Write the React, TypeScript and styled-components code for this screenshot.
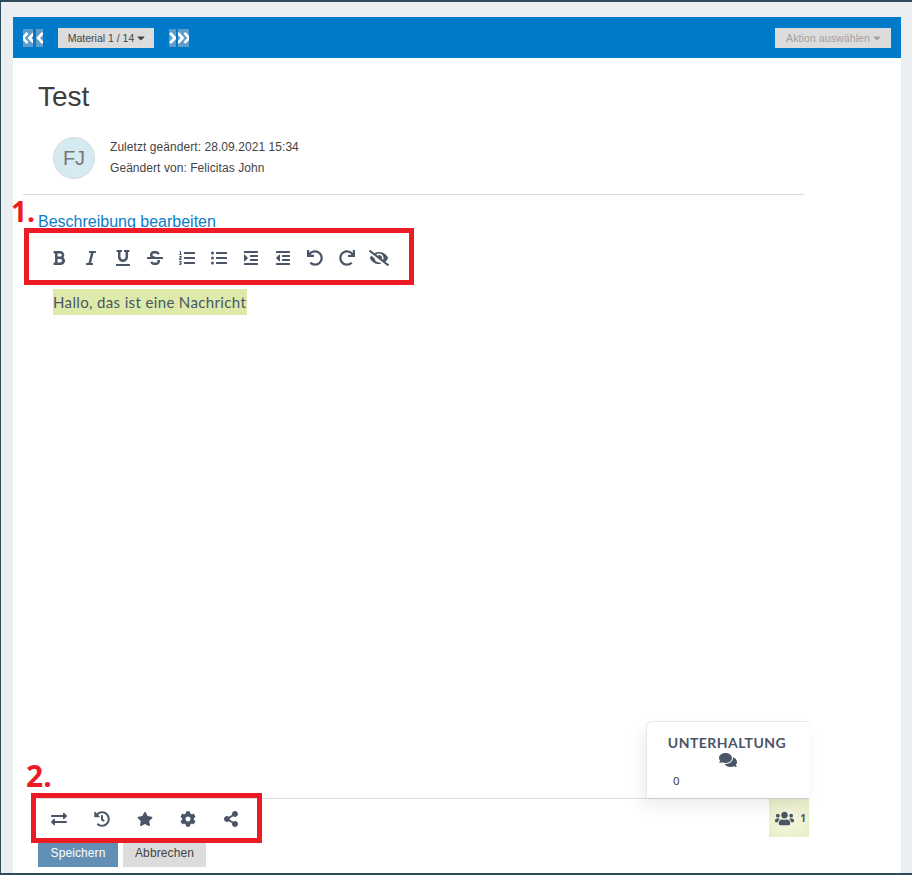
import styled, { createGlobalStyle } from 'styled-components';
import {
  FaAngleDoubleLeft,
  FaAngleDoubleRight,
  FaAngleLeft,
  FaAngleRight,
  FaBold,
  FaCaretDown,
  FaCog,
  FaComments,
  FaExchangeAlt,
  FaEyeSlash,
  FaHistory,
  FaIndent,
  FaItalic,
  FaListOl,
  FaListUl,
  FaOutdent,
  FaRedo,
  FaShareAlt,
  FaStar,
  FaStrikethrough,
  FaUnderline,
  FaUndo,
  FaUsers,
} from 'react-icons/fa';

const GlobalStyle = createGlobalStyle`
  html, body {
    margin: 0;
    padding: 0;
    overflow: hidden;
  }
  body {
    font-family: "Liberation Sans", Arial, sans-serif;
  }
`;

const Frame = styled.div`
  position: relative;
  box-sizing: border-box;
  width: 912px;
  height: 875px;
  padding: 15px 11px 0 12px;
  background: #ebeff1;
  border: 0 solid #2f4a5a;
  border-width: 2px 0 2px 1px;
  overflow: hidden;
`;

const Panel = styled.div`
  height: 856px;
  background: #fff;
  display: flex;
  flex-direction: column;
`;

const Header = styled.header`
  height: 41px;
  background: #027aca;
  display: flex;
  align-items: center;
  padding: 0 10px;
  flex: none;
`;

const Pager = styled.span<{ $w: number; $gap?: number }>`
  display: inline-flex;
  align-items: center;
  justify-content: center;
  height: 18px;
  width: ${(p) => p.$w}px;
  margin-right: ${(p) => p.$gap ?? 0}px;
  background: #5d9ccb;
  color: #fff;
  overflow: hidden;
  svg {
    flex: none;
    width: 18px;
    height: 18px;
  }
`;

const MenuButton = styled.button<{ $muted?: boolean }>`
  box-sizing: border-box;
  height: 20px;
  padding: 0 0 0 3px;
  border: 0;
  display: inline-flex;
  align-items: center;
  justify-content: center;
  gap: 1px;
  background: #dcdcdc;
  color: ${(p) => (p.$muted ? '#a0a0a0' : '#444')};
  font: 10.5px "Liberation Sans", Arial, sans-serif;
  letter-spacing: ${(p) => (p.$muted ? '0.1px' : '0')};
  width: ${(p) => (p.$muted ? 116 : 96)}px;
  margin: ${(p) => (p.$muted ? '0 0 0 auto' : '0 15px 0 15px')};
  svg {
    font-size: 12px;
  }
`;

const Body = styled.main`
  flex: 1;
  width: 796px;
  display: flex;
  flex-direction: column;
  padding-left: 10px;
  box-sizing: border-box;
`;

const Title = styled.h1`
  margin: 22px 0 0 15px;
  font-size: 28px;
  line-height: 33px;
  font-weight: 400;
  color: #3d3d3d;
`;

const MetaRow = styled.div`
  display: flex;
  align-items: center;
  gap: 15px;
  margin: 24px 0 0 30px;
`;

const Avatar = styled.div`
  box-sizing: border-box;
  width: 42px;
  height: 42px;
  border-radius: 50%;
  background: #d6eaf2;
  border: 1px solid #d5dcdf;
  color: #777;
  font-size: 20px;
  display: flex;
  align-items: center;
  justify-content: center;
`;

const MetaText = styled.div`
  font-size: 12px;
  line-height: 21px;
  letter-spacing: 0.06px;
  color: #444;
`;

const Rule = styled.hr`
  width: 781px;
  margin: 15px 0 0;
  border: 0;
  border-top: 1px solid #d9d9d9;
`;

const EditLink = styled.a`
  margin: 18px 0 0 15px;
  font-size: 16px;
  line-height: 18px;
  color: #0a7dc8;
  text-decoration: none;
`;

const IconBar = styled.div<{ $gap: number; $left: number }>`
  display: flex;
  align-items: center;
  gap: ${(p) => p.$gap}px;
  margin-left: ${(p) => p.$left}px;
  color: #4a5568;
`;

const EditorBar = styled(IconBar)`
  height: 32px;
  margin-top: 11px;
  svg {
    width: 16px;
    height: 16px;
  }
  svg:last-child {
    width: 20px;
    margin: 0 -2px;
  }
`;

const Message = styled.div`
  align-self: flex-start;
  margin: 15px 0 0 30px;
  width: 194px;
  height: 26px;
  background: #deeaaa;
  color: #4a5568;
  font: 15px/26px Lato, "Noto Sans", sans-serif;
  letter-spacing: 0.36px;
  white-space: nowrap;
`;

const Spacer = styled.div`
  flex: 1;
`;

const FooterLine = styled.div`
  width: 771px;
  margin-left: 15px;
  height: 39px;
  border-top: 1px solid #dcdcdc;
  display: flex;
  align-items: center;
  justify-content: space-between;
  box-sizing: border-box;
  flex: none;
`;

const FooterBar = styled(IconBar)`
  padding-top: 2px;
  svg {
    width: 16px;
    height: 16px;
  }
`;

const UsersBadge = styled.div`
  width: 40px;
  height: 38px;
  padding-left: 3px;
  box-sizing: border-box;
  background: radial-gradient(circle, #f6f8e2 0%, #e6edc4 100%);
  color: #4a5568;
  font: 700 10px "Noto Sans", sans-serif;
  display: flex;
  align-items: center;
  justify-content: center;
  gap: 6px;
  svg {
    font-size: 19px;
  }
`;

const ActionRow = styled.div`
  display: flex;
  gap: 5px;
  margin: 1px 0 6px 15px;
  flex: none;
`;

const ActionButton = styled.button<{ $primary?: boolean }>`
  width: ${(p) => (p.$primary ? 80 : 83)}px;
  height: 29px;
  padding: 0;
  border: 0;
  background: ${(p) => (p.$primary ? '#6190b4' : '#dcdcdc')};
  color: ${(p) => (p.$primary ? '#fff' : '#444')};
  font: 12px "Liberation Sans", Arial, sans-serif;
  letter-spacing: 0.1px;
`;

const ChatCard = styled.aside`
  position: absolute;
  left: 645px;
  top: 719px;
  box-sizing: border-box;
  width: 163px;
  height: 78px;
  background: #fff;
  border: 1px solid #e5e7eb;
  border-right: 0;
  border-bottom-color: #c9ccd6;
  border-radius: 6px 0 0 0;
  box-shadow: -4px 8px 16px rgba(0, 0, 0, 0.07);
  color: #4a5568;
  text-align: center;
  padding: 13px 2px 0 0;
  font-family: Lato, "Noto Sans", sans-serif;
`;

const ChatTitle = styled.div`
  font-size: 14px;
  line-height: 16px;
  font-weight: 700;
  letter-spacing: 0.45px;
`;

const ChatIcon = styled.div`
  font-size: 18px;
  line-height: 18px;
  height: 18px;
  padding-left: 2px;
`;

const ChatCount = styled.div`
  text-align: left;
  margin: 5px 0 0 26px;
  font: 11.5px/14px "Noto Sans", sans-serif;
  color: #444;
`;

const Callout = styled.div<{ $x: number; $y: number; $w: number; $h: number }>`
  position: absolute;
  box-sizing: border-box;
  left: ${(p) => p.$x}px;
  top: ${(p) => p.$y}px;
  width: ${(p) => p.$w}px;
  height: ${(p) => p.$h}px;
  border: 5px solid #ed1c24;
`;

const CalloutLabel = styled.span<{ $x: number; $y: number; $size: number }>`
  position: absolute;
  left: ${(p) => p.$x}px;
  top: ${(p) => p.$y}px;
  color: #ed1c24;
  font: 700 ${(p) => p.$size}px/30px "Open Sans", "Noto Sans", sans-serif;
`;

const App = () => {
  return (
    <Frame>
      <GlobalStyle />
      <Panel>
        <Header>
          <Pager $w={10} $gap={3}>
            <FaAngleDoubleLeft />
          </Pager>
          <Pager $w={7}>
            <FaAngleLeft />
          </Pager>
          <MenuButton>
            Material 1 / 14 <FaCaretDown />
          </MenuButton>
          <Pager $w={7} $gap={2}>
            <FaAngleRight />
          </Pager>
          <Pager $w={11}>
            <FaAngleDoubleRight />
          </Pager>
          <MenuButton $muted>
            Aktion auswählen <FaCaretDown />
          </MenuButton>
        </Header>
        <Body>
          <Title>Test</Title>
          <MetaRow>
            <Avatar>FJ</Avatar>
            <MetaText>
              Zuletzt geändert: 28.09.2021 15:34
              <br />
              Geändert von: Felicitas John
            </MetaText>
          </MetaRow>
          <Rule />
          <EditLink href="#edit">Beschreibung bearbeiten</EditLink>
          <EditorBar $gap={16} $left={28}>
            <FaBold />
            <FaItalic />
            <FaUnderline />
            <FaStrikethrough />
            <FaListOl />
            <FaListUl />
            <FaIndent />
            <FaOutdent />
            <FaUndo />
            <FaRedo />
            <FaEyeSlash />
          </EditorBar>
          <Message>Hallo, das ist eine Nachricht</Message>
          <Spacer />
          <FooterLine>
            <FooterBar $gap={27} $left={13}>
              <FaExchangeAlt />
              <FaHistory />
              <FaStar />
              <FaCog />
              <FaShareAlt />
            </FooterBar>
            <UsersBadge>
              <FaUsers />1
            </UsersBadge>
          </FooterLine>
          <ActionRow>
            <ActionButton $primary>Speichern</ActionButton>
            <ActionButton>Abbrechen</ActionButton>
          </ActionRow>
        </Body>
      </Panel>
      <ChatCard>
        <ChatTitle>UNTERHALTUNG</ChatTitle>
        <ChatIcon>
          <FaComments />
        </ChatIcon>
        <ChatCount>0</ChatCount>
      </ChatCard>
      <CalloutLabel $x={10} $y={194} $size={28}>1.</CalloutLabel>
      <Callout $x={23} $y={226} $w={390} $h={57} />
      <CalloutLabel $x={25} $y={759} $size={30}>2.</CalloutLabel>
      <Callout $x={30} $y={791} $w={231} $h={50} />
    </Frame>
  );
};

export default App;
